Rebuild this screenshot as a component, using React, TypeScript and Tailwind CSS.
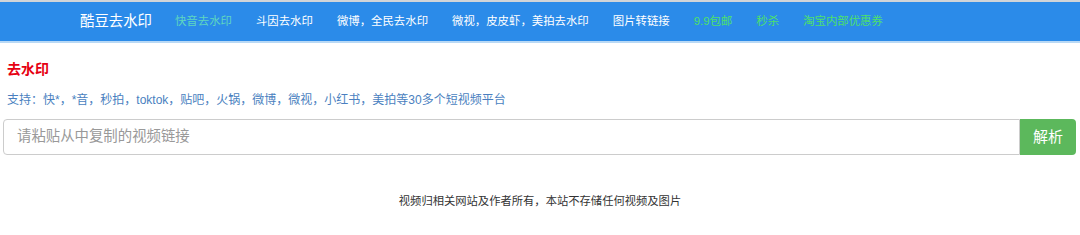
import React from "react";

const font = { fontFamily: '"Liberation Sans", "Noto Sans CJK SC", sans-serif' };

export default function App() {
  const links: { t: string; c: string }[] = [
    { t: "快音去水印", c: "text-[#5fd6c0]" },
    { t: "斗因去水印", c: "text-white" },
    { t: "微博，全民去水印", c: "text-white" },
    { t: "微视，皮皮虾，美拍去水印", c: "text-white" },
    { t: "图片转链接", c: "text-white" },
    { t: "9.9包邮", c: "text-[#4ee06a]" },
    { t: "秒杀", c: "text-[#4ee06a]" },
    { t: "淘宝内部优惠券", c: "text-[#4ee06a]" },
  ];
  return (
    <div className="w-[1080px] h-[235px] bg-white" style={font}>
      <div className="border-t-2 border-[#d0d4d8] border-b-2 border-b-[#b9d9f5] bg-[#2b8be9] h-[43px] flex items-center pl-[80px]">
        <span className="text-white text-[14.4px] mr-[23px]">酷豆去水印</span>
        <div className="flex items-center gap-[24px] text-[11.4px]">
          {links.map((l) => (
            <span key={l.t} className={l.c}>{l.t}</span>
          ))}
        </div>
      </div>
      <div className="px-[7px]">
        <div className="text-[#e60012] text-[14px] font-bold mt-[16px] leading-[20px]">去水印</div>
        <div className="text-[#4a7fc0] text-[12px] mt-[13px] leading-[17px]">
          支持：快*，*音，秒拍，toktok，贴吧，火锅，微博，微视，小红书，美拍等30多个短视频平台
        </div>
      </div>
      <div className="flex pl-[3px] pr-[4px] mt-[10px]">
        <div className="flex-1 h-[36px] border border-[#cccccc] rounded-l-[4px] flex items-center pl-[13px] text-[14.4px] text-[#999999]">
          请粘贴从中复制的视频链接
        </div>
        <div className="w-[56px] h-[36px] bg-[#5cb85c] rounded-r-[4px] flex items-center justify-center text-white text-[15px]">
          解析
        </div>
      </div>
      <div className="text-center text-[11.3px] text-[#333333] mt-[38px]">
        视频归相关网站及作者所有，本站不存储任何视频及图片
      </div>
    </div>
  );
}
